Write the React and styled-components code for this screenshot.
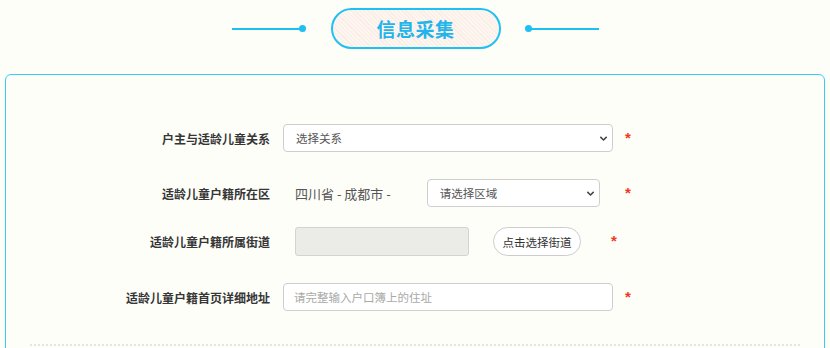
import React from "react";
import styled, { createGlobalStyle } from "styled-components";

const GlobalStyle = createGlobalStyle`
  html, body {
    margin: 0;
    padding: 0;
    background: #fefef9;
  }
  body {
    font-family: "Noto Sans CJK SC", "Noto Sans", sans-serif;
    color: #333;
  }
  * { box-sizing: border-box; }
`;

const Page = styled.div`
  width: 830px;
  padding: 8px 5px 0;
`;

const Header = styled.header`
  display: flex;
  justify-content: center;
  align-items: center;
  height: 41px;
  margin-bottom: 25px;
`;

const Deco = styled.div`
  display: flex;
  align-items: center;
  flex-direction: ${(p) => (p.$reverse ? "row-reverse" : "row")};
  margin: ${(p) => (p.$reverse ? "0 0 0 24px" : "0 25px 0 0")};
`;

const DecoBar = styled.span`
  display: block;
  width: 68px;
  height: 2px;
  background: #1ec0f2;
`;

const DecoDot = styled.span`
  display: block;
  width: 7px;
  height: 7px;
  border-radius: 50%;
  background: #1ec0f2;
  margin: ${(p) => (p.$reverse ? "0 -1px 0 0" : "0 0 0 -1px")};
`;

const Pill = styled.h1`
  margin: 0;
  width: 170px;
  height: 41px;
  border: 2px solid #1fc1f3;
  border-radius: 21px;
  display: flex;
  align-items: center;
  justify-content: center;
  font-size: 19px;
  font-weight: 700;
  color: #22b4ea;
  letter-spacing: 0.5px;
  background: repeating-linear-gradient(
    45deg,
    #fdf5f0 0px,
    #fdf5f0 2px,
    #fbede6 2px,
    #fbede6 3px
  );
`;

const Card = styled.section`
  border: 1px solid #37cdfb;
  border-radius: 6px;
  padding-top: 49px;
  min-height: 285px;
`;

const Row = styled.div`
  display: flex;
  align-items: center;
  height: ${(p) => p.$h || 28}px;
  margin-top: ${(p) => p.$mt || 0}px;
`;

const Label = styled.label`
  width: 264px;
  text-align: right;
  font-size: 12px;
  font-weight: 700;
  color: #363636;
  margin-right: 13px;
  white-space: nowrap;
`;

const Control = styled.div`
  display: flex;
  align-items: center;
  width: ${(p) => (p.$w ? `${p.$w}px` : "auto")};
  padding-left: ${(p) => p.$pl || 0}px;
  height: 100%;
`;

const SelectWrap = styled.div`
  position: relative;
  width: ${(p) => p.$w}px;
  height: 28px;
  margin-left: ${(p) => p.$ml || 0}px;
`;

const Select = styled.select`
  appearance: none;
  -webkit-appearance: none;
  width: 100%;
  height: 100%;
  border: 1px solid #cfcfcf;
  border-radius: 4px;
  background: #fff;
  padding: 0 24px 0 12px;
  font-family: "Noto Sans CJK SC", sans-serif;
  font-size: 11.5px;
  color: #555;
  outline: none;
`;

const Chevron = styled.svg`
  position: absolute;
  right: 5px;
  top: 50%;
  width: 9px;
  height: 9px;
  margin-top: -4px;
  pointer-events: none;
`;

const Region = styled.span`
  font-size: 13px;
  color: #555;
  margin-right: 36px;
  white-space: nowrap;
`;

const TextInput = styled.input`
  width: ${(p) => p.$w}px;
  height: ${(p) => p.$h || 28}px;
  border: 1px solid ${(p) => (p.disabled ? "#d3d3d0" : "#cfcfcf")};
  border-radius: ${(p) => (p.disabled ? 3 : 4)}px;
  background: ${(p) => (p.disabled ? "#ebebe8" : "#fff")};
  padding: 0 10px;
  font-family: "Noto Sans CJK SC", sans-serif;
  font-size: 11.5px;
  color: #555;
  outline: none;
  &::placeholder {
    color: #a9a9a9;
  }
`;

const PillButton = styled.button`
  width: 88px;
  height: 29px;
  margin-left: 24px;
  border: 1px solid #cdcdcd;
  border-radius: 15px;
  background: #fff;
  font-family: "Noto Sans CJK SC", sans-serif;
  font-size: 11.5px;
  color: #333;
  padding: 0;
`;

const Star = styled.span`
  font-family: "Liberation Sans", Arial, sans-serif;
  font-size: 15px;
  font-weight: 700;
  color: #f2391c;
  margin-left: ${(p) => p.$ml || 12}px;
  margin-top: -2px;
`;

const Divider = styled.div`
  margin: 33px 24px 0;
  border-top: 2px dotted #e6e6dd;
`;

const ChevronIcon = () => (
  <Chevron viewBox="0 0 10 10">
    <path d="M1.5 3.2 L5 6.6 L8.5 3.2" fill="none" stroke="#444" strokeWidth="1.7" />
  </Chevron>
);

export default function App() {
  return (
    <>
      <GlobalStyle />
      <Page>
        <Header>
          <Deco>
            <DecoBar />
            <DecoDot />
          </Deco>
          <Pill>信息采集</Pill>
          <Deco $reverse>
            <DecoBar />
            <DecoDot $reverse />
          </Deco>
        </Header>
        <Card>
          <Row>
            <Label>户主与适龄儿童关系</Label>
            <Control $w={330}>
              <SelectWrap $w={330}>
                <Select defaultValue="">
                  <option value="">选择关系</option>
                </Select>
                <ChevronIcon />
              </SelectWrap>
            </Control>
            <Star>*</Star>
          </Row>
          <Row $mt={27}>
            <Label>适龄儿童户籍所在区</Label>
            <Control $w={330} $pl={12}>
              <Region>四川省 - 成都市 -</Region>
              <SelectWrap $w={173}>
                <Select defaultValue="">
                  <option value="">请选择区域</option>
                </Select>
                <ChevronIcon />
              </SelectWrap>
            </Control>
            <Star>*</Star>
          </Row>
          <Row $mt={20} $h={29}>
            <Label>适龄儿童户籍所属街道</Label>
            <Control $pl={12}>
              <TextInput $w={174} $h={29} disabled />
              <PillButton>点击选择街道</PillButton>
            </Control>
            <Star $ml={30}>*</Star>
          </Row>
          <Row $mt={27}>
            <Label>适龄儿童户籍首页详细地址</Label>
            <Control $w={330}>
              <TextInput $w={330} placeholder="请完整输入户口簿上的住址" />
            </Control>
            <Star>*</Star>
          </Row>
          <Divider />
        </Card>
      </Page>
    </>
  );
}
